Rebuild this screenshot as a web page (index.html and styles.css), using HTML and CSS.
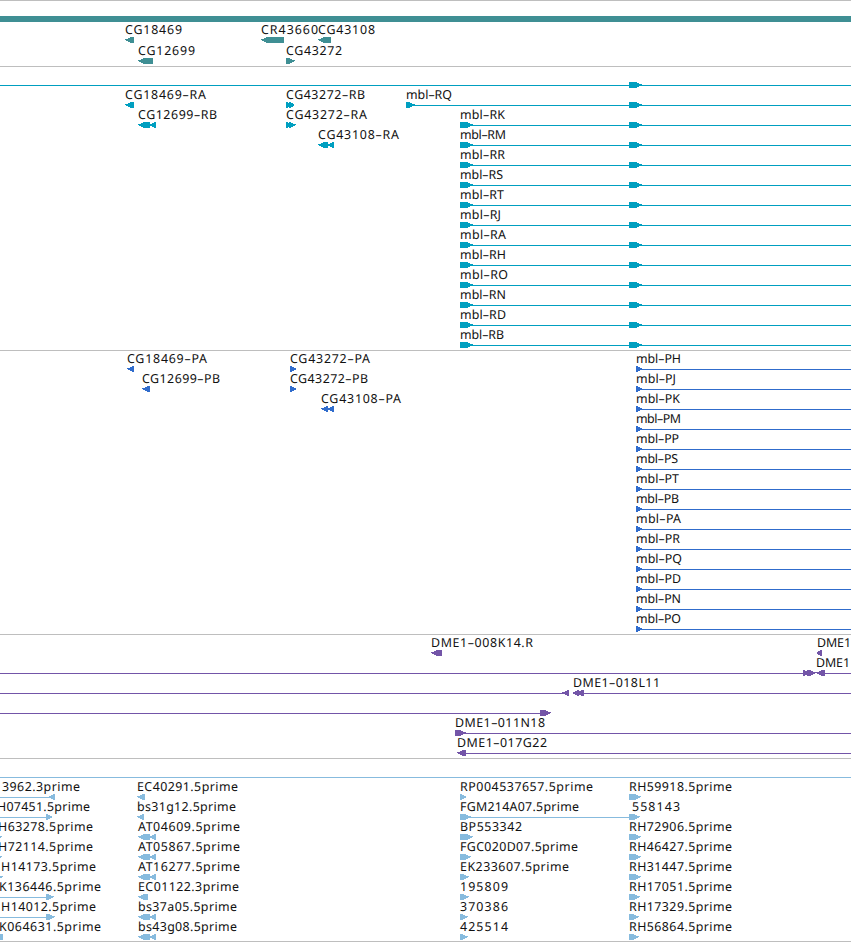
FILE: index.html
```html
<!DOCTYPE html>
<html lang="en">
<head>
<meta charset="utf-8">
<title>Genome browser</title>
<link rel="stylesheet" href="styles.css">
</head>
<body>
<main class="browser" id="browser"></main>
<script src="tracks.js"></script>
</body>
</html>
```
FILE: styles.css
```css
* { box-sizing: border-box; }
body { margin: 0; background: #fff; }
.browser { display: flex; flex-direction: column; width: 851px; height: 942px; overflow: hidden; border-bottom: 1px solid #bebebe; }
.track { flex: none; border-top: 1px solid #bebebe; }
.track svg { display: block; width: 851px; height: 100%; overflow: hidden; shape-rendering: crispEdges; }
.track text { font-family: "Noto Sans", sans-serif; font-size: 12.4px; fill: #111; text-rendering: geometricPrecision; }
.gene { height: 66px; color: #3f8f94; }
.transcript { height: 284px; color: #009fc0; }
.protein { height: 284px; color: #306ccc; }
.clone { height: 124px; color: #7355a8; }
.est { height: 183px; color: #87bbde; }
.track path, .track rect { fill: currentColor; }
```
FILE: tracks.js
```js
// label: [text, left, right, row]; glyph: [kind, start, end, row]
// kinds: R/L arrows, B box, H connector line
const tracks = [];

const gene = { name: 'gene', height: 65, base: 33, pitch: 21, labels: [
  ['CG18469', 125, 182, 0], ['CR43660', 261, 318, 0], ['CG43108', 318, 375, 0],
  ['CG12699', 138, 195, 1], ['CG43272', 286, 342, 1]
], glyphs: [
  ['L', 125, 134, 0], ['L', 261, 284, 0], ['L', 318, 331, 0], ['L', 138, 153, 1], ['R', 286, 295, 1]
], bar: true };
tracks.push(gene);

const transcript = { name: 'transcript', height: 283, base: 32, pitch: 20, labels: [
  ['CG18469-RA', 125, 206, 0], ['CG43272-RB', 286, 365, 0], ['mbl-RQ', 406, 452, 0],
  ['CG12699-RB', 138, 217, 1], ['CG43272-RA', 286, 367, 1], ['CG43108-RA', 318, 399, 2]
], glyphs: [
  ['H', 0, 851, -1], ['R', 629, 642, -1],
  ['L', 125, 134, 0], ['R', 286, 291, 0], ['R', 289, 294, 0],
  ['R', 406, 415, 0], ['H', 407, 851, 0], ['R', 629, 642, 0],
  ['L', 138, 150, 1], ['L', 150, 156, 1], ['R', 286, 291, 1], ['R', 289, 296, 1],
  ['L', 318, 328, 2], ['L', 328, 334, 2]
] };
[['K', 505], ['M', 506], ['R', 505], ['S', 503], ['T', 504], ['J', 501], ['A', 506],
 ['H', 506], ['O', 508], ['N', 506], ['D', 506], ['B', 504]].forEach(([c, end], i) => {
  transcript.labels.push(['mbl-R' + c, 460, end, i + 1]);
  transcript.glyphs.push(['R', 460, 473, i + 1], ['H', 461, 851, i + 1], ['R', 629, 642, i + 1]);
});
tracks.push(transcript);

const protein = { name: 'protein', height: 283, base: 12, pitch: 20, labels: [
  ['CG18469-PA', 127, 207, 0], ['CG43272-PA', 290, 370, 0],
  ['CG12699-PB', 142, 220, 1], ['CG43272-PB', 290, 368, 1], ['CG43108-PA', 321, 401, 2]
], glyphs: [
  ['L', 127, 134, 0], ['R', 290, 296, 0], ['L', 142, 150, 1], ['R', 290, 296, 1],
  ['L', 321, 328, 2], ['L', 328, 334, 2]
] };
[['H', 681], ['J', 676], ['K', 680], ['M', 681], ['P', 679], ['S', 678], ['T', 679], ['B', 679],
 ['A', 681], ['R', 680], ['Q', 682], ['D', 681], ['N', 681], ['O', 681]].forEach(([c, end], i) => {
  protein.labels.push(['mbl-P' + c, 636, end, i]);
  protein.glyphs.push(['R', 636, 642, i], ['H', 637, 851, i]);
});
tracks.push(protein);

tracks.push({ name: 'clone', height: 123, base: 12, pitch: 20, labels: [
  ['DME1-008K14.R', 431, 533, 0], ['DME1', 817, 851, 0], ['DME1', 816, 850, 1],
  ['DME1-018L11', 573, 660, 2], ['DME1-011N18', 455, 545, 4], ['DME1-017G22', 457, 547, 5]
], glyphs: [
  ['L', 431, 442, 0], ['L', 817, 822, 0],
  ['H', 0, 804, 1], ['R', 803, 809, 1], ['R', 807, 816, 1], ['L', 816, 825, 1], ['H', 825, 851, 1],
  ['H', 0, 565, 2], ['L', 562, 569, 2], ['L', 573, 579, 2], ['L', 576, 584, 2], ['H', 584, 851, 2],
  ['H', 0, 540, 3], ['R', 540, 551, 3], ['R', 455, 466, 4], ['H', 460, 851, 4],
  ['L', 457, 466, 5], ['H', 466, 851, 5]
] });

const est = { name: 'est', height: 182, base: 32, pitch: 20, labels: [
  ['3962.3prime', 2, 80, 0], ['H07451.5prime', -3, 90, 1], ['H63278.5prime', -2, 93, 2],
  ['H72114.5prime', -2, 93, 3], ['H14173.5prime', 1, 96, 4], ['K136446.5prime', -1, 101, 5],
  ['H14012.5prime', 1, 96, 6], ['K064631.5prime', -1, 101, 7],
  ['EC40291.5prime', 137, 238, 0], ['bs31g12.5prime', 137, 236, 1], ['AT04609.5prime', 138, 240, 2],
  ['AT05867.5prime', 138, 240, 3], ['AT16277.5prime', 138, 240, 4], ['EC01122.3prime', 138, 239, 5],
  ['bs37a05.5prime', 138, 237, 6], ['bs43g08.5prime', 138, 237, 7],
  ['RP004537657.5prime', 460, 593, 0], ['FGM214A07.5prime', 460, 579, 1], ['BP553342', 460, 522, 2],
  ['FGC020D07.5prime', 460, 578, 3], ['EK233607.5prime', 460, 569, 4], ['195809', 460, 508, 5],
  ['370386', 460, 508, 6], ['425514', 460, 508, 7],
  ['RH59918.5prime', 629, 732, 0], ['558143', 632, 680, 1], ['RH72906.5prime', 629, 732, 2],
  ['RH46427.5prime', 629, 732, 3], ['RH31447.5prime', 629, 732, 4], ['RH17051.5prime', 629, 732, 5],
  ['RH17329.5prime', 629, 732, 6], ['RH56864.5prime', 629, 732, 7]
], glyphs: [
  ['H', 0, 851, -1],
  ['H', 0, 50, 0], ['L', 49, 55, 0], ['H', 0, 46, 1], ['R', 46, 52, 1], ['R', -5, 2, 2], ['R', -5, 2, 3],
  ['R', -4, 3, 4], ['H', 0, 46, 5], ['R', 46, 54, 5], ['H', 0, 46, 6], ['R', 46, 55, 6], ['B', 0, 3, 7],
  ['L', 137, 145, 0], ['L', 137, 144, 1], ['L', 138, 148, 5],
  ['R', 460, 466, 0], ['R', 460, 471, 1], ['H', 469, 630, 1], ['R', 460, 473, 2], ['R', 460, 471, 3],
  ['R', 460, 469, 4], ['R', 460, 469, 5], ['R', 460, 468, 6], ['R', 460, 468, 7],
  ['R', 629, 641, 0], ['B', 629, 630, 1], ['R', 630, 633, 1], ['R', 632, 640, 1],
  ['R', 629, 641, 2], ['R', 629, 641, 3], ['R', 629, 641, 4], ['R', 629, 640, 5],
  ['R', 629, 639, 6], ['R', 629, 639, 7]
] };
[2, 3, 4, 6, 7].forEach(r => est.glyphs.push(['L', 138, 150, r], ['L', 150, 156, r]));
tracks.push(est);

function glyph([kind, a, b], y) {
  if (kind === 'H') return `<rect x="${a}" y="${y + 3}" width="${b - a}" height="1"/>`;
  if (kind === 'B') return `<rect x="${a}" y="${y}" width="${b - a}" height="6"/>`;
  const len = b - a;
  const body = Math.max(1, len - 6);
  // pixel reach of the arrow head for each of the six scanlines
  const reach = [1, 3, 6, 5, 3, 1];
  return reach.map((r, i) => {
    const w = Math.min(len, body + r);
    return `<rect x="${kind === 'R' ? a : b - w}" y="${y + i}" width="${w}" height="1"/>`;
  }).join('');
}

document.getElementById('browser').innerHTML = tracks.map(t => {
  const yOf = row => t.base + 1 + row * t.pitch;
  let s = t.bar ? '<rect x="0" y="15" width="851" height="6"/>' : '';
  s += t.glyphs.map(g => g[3] === -1 && t.name === 'est' && g[0] === 'H'
    ? '<rect x="0" y="18" width="851" height="1"/>'
    : glyph(g, yOf(g[3]) + 2)).join('');
  s += t.labels.map(([text, a, b, row]) =>
    `<text x="${a}" y="${yOf(row) - 1}" textLength="${b - a}">${text.replace('-', '–')}</text>`).join('');
  return `<section class="track ${t.name}"><svg viewBox="0 0 851 ${t.height}">${s}</svg></section>`;
}).join('');
```
